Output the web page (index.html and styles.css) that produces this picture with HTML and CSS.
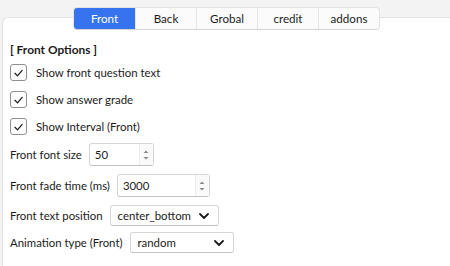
FILE: index.html
```html
<!DOCTYPE html>
<html>
<head>
<meta charset="utf-8">
<link rel="stylesheet" href="styles.css">
</head>
<body>
<div class="window">
  <div class="tabs">
    <div class="tab active">Front</div>
    <div class="tab">Back</div>
    <div class="tab">Grobal</div>
    <div class="tab">credit</div>
    <div class="tab">addons</div>
  </div>
  <div class="panel">
    <div class="title">[ Front Options ]</div>
    <label class="check"><span class="box"><svg viewBox="0 0 16 16" width="16" height="16"><path d="M4.2 8.3 L6.9 11 L11.9 5.2" fill="none" stroke="#1b1b1b" stroke-width="1.3" stroke-linecap="round" stroke-linejoin="round"/></svg></span>Show front question text</label>
    <label class="check"><span class="box"><svg viewBox="0 0 16 16" width="16" height="16"><path d="M4.2 8.3 L6.9 11 L11.9 5.2" fill="none" stroke="#1b1b1b" stroke-width="1.3" stroke-linecap="round" stroke-linejoin="round"/></svg></span>Show answer grade</label>
    <label class="check"><span class="box"><svg viewBox="0 0 16 16" width="16" height="16"><path d="M4.2 8.3 L6.9 11 L11.9 5.2" fill="none" stroke="#1b1b1b" stroke-width="1.3" stroke-linecap="round" stroke-linejoin="round"/></svg></span>Show Interval (Front)</label>

    <div class="field f1">
      <span class="label">Front font size</span>
      <div class="spin w65"><span class="val">50</span><span class="arrows"><svg viewBox="0 0 8 14" width="8" height="14"><path d="M1.5 5 L4 2.5 L6.5 5 Z M1.5 9 L4 11.5 L6.5 9 Z" fill="#8a8a8a"/></svg></span></div>
    </div>
    <div class="field f2">
      <span class="label">Front fade time (ms)</span>
      <div class="spin w93"><span class="val">3000</span><span class="arrows"><svg viewBox="0 0 8 14" width="8" height="14"><path d="M1.5 5 L4 2.5 L6.5 5 Z M1.5 9 L4 11.5 L6.5 9 Z" fill="#8a8a8a"/></svg></span></div>
    </div>
    <div class="field f3">
      <span class="label">Front text position</span>
      <div class="combo w109"><span class="val">center_bottom</span><svg class="chev" viewBox="0 0 10 6" width="10" height="6"><path d="M1 1 L5 5 L9 1" fill="none" stroke="#1b1b1b" stroke-width="1.8" stroke-linecap="round" stroke-linejoin="round"/></svg></div>
    </div>
    <div class="field f4">
      <span class="label">Animation type (Front)</span>
      <div class="combo w104"><span class="val">random</span><svg class="chev" viewBox="0 0 10 6" width="10" height="6"><path d="M1 1 L5 5 L9 1" fill="none" stroke="#1b1b1b" stroke-width="1.8" stroke-linecap="round" stroke-linejoin="round"/></svg></div>
    </div>
  </div>
</div>
</body>
</html>
```
FILE: styles.css
```css
html, body {
  margin: 0;
  padding: 0;
  background: #f3f3f3;
  width: 450px;
  height: 266px;
  overflow: hidden;
}
body {
  font-family: "Lato", "Noto Sans", sans-serif;
  font-size: 11.4px;
  color: #1b1b1b;
}
.window {
  display: flex;
  flex-direction: column;
  height: 266px;
}
.tabs {
  position: relative;
  z-index: 1;
  align-self: flex-start;
  margin: 7px 0 0 73px;
  display: flex;
  height: 23px;
  border: 1px solid #e3e3e3;
  border-bottom-color: #d4d4d4;
  border-radius: 4px;
  background: #fbfbfb;
  box-sizing: border-box;
  overflow: hidden;
}
.tab {
  width: 61px;
  display: flex;
  align-items: center;
  justify-content: center;
  font-size: 11.6px;
  border-left: 1px solid #e6e6e6;
  box-sizing: border-box;
}
.tab:first-child {
  border-left: none;
}
.tab.active {
  background: #3574ee;
  color: #ffffff;
}
.panel {
  flex: 1;
  min-height: 0;
  overflow: hidden;
  margin: -13px 0 0 2px;
  background: #ffffff;
  border: 1px solid #e2e2e2;
  border-right: none;
  border-bottom: none;
  border-top-left-radius: 6px;
  padding: 23px 0 0 7px;
  display: flex;
  flex-direction: column;
  align-items: flex-start;
}
.title {
  height: 18px;
  line-height: 18px;
  font-weight: bold;
  font-size: 11.9px;
}
.check {
  height: 27px;
  display: flex;
  align-items: center;
}
.box {
  width: 15px;
  height: 15px;
  border: 1px solid #8f8f8f;
  border-radius: 3px;
  margin-right: 9px;
  display: flex;
  align-items: center;
  justify-content: center;
  background: #fdfdfd;
}
.field {
  display: flex;
  align-items: center;
  gap: 7px;
}
.f1 { margin-top: 3px; }
.f2 { margin-top: 8px; }
.f3 { margin-top: 8px; }
.f4 { margin-top: 6px; }
.spin, .combo {
  box-sizing: border-box;
  border: 1px solid #d6d6d6;
  border-bottom-color: #c2c2c2;
  border-radius: 3px;
  background: #ffffff;
  display: flex;
  align-items: center;
}
.spin {
  height: 23px;
  padding-left: 5px;
}
.combo {
  height: 21px;
  padding: 0 9px 0 7px;
}
.val {
  flex: 1;
}
.arrows {
  width: 13px;
  height: 21px;
  display: flex;
  align-items: center;
  justify-content: center;
  border-left: 1px solid #ececec;
  background: #fafafa;
}
.chev {
  display: block;
}
.w65 { width: 65px; }
.w93 { width: 93px; }
.w109 { width: 109px; }
.w104 { width: 104px; }
```
